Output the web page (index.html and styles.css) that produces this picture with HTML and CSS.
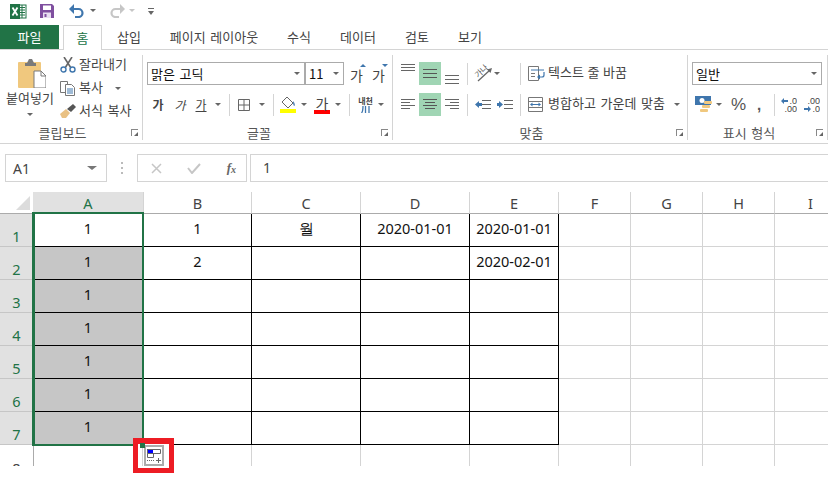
FILE: index.html
```html
<!DOCTYPE html>
<html lang="ko">
<head>
<meta charset="utf-8">
<title>Excel</title>
<link rel="stylesheet" href="styles.css">
</head>
<body>
<div class="app">
  <div class="qat">
    <svg class="q-excel" width="17" height="15" viewBox="0 0 17 15"><rect x="5" y="1" width="11" height="13" fill="#fff" stroke="#217346"/><path d="M9 3.5h6M9 6h6M9 8.5h6M9 11h6M12 1v13" stroke="#217346" fill="none"/><rect x="0" y="0" width="10" height="15" fill="#217346"/><path d="M2.5 3.5l5 8M7.5 3.5l-5 8" stroke="#fff" stroke-width="1.8" fill="none"/></svg>
    <svg class="q-save" width="14" height="14" viewBox="0 0 14 14"><path d="M0 0h12l2 2v12H0z" fill="#7f4f9f"/><rect x="3" y="1.5" width="8" height="4.5" fill="#fff"/><rect x="3" y="8.5" width="8" height="5.5" fill="#e8dff0"/><rect x="4.5" y="10" width="2" height="3" fill="#7f4f9f"/></svg>
    <svg class="q-undo" width="15" height="14" viewBox="0 0 15 14"><path d="M3 5h6.5a4 4 0 0 1 0 8H6" stroke="#3f76ad" stroke-width="2.2" fill="none"/><path d="M0 5l5-5v10z" fill="#3f76ad"/></svg>
    <span class="caret q-c1"></span>
    <svg class="q-redo" width="15" height="14" viewBox="0 0 15 14"><path d="M12 5H5.5a4 4 0 0 0 0 8H9" stroke="#c6c6c6" stroke-width="2.2" fill="none"/><path d="M15 5l-5-5v10z" fill="#c6c6c6"/></svg>
    <span class="caret caret-light q-c2"></span>
    <svg class="q-more" width="6" height="7" viewBox="0 0 6 7"><path d="M0 0h6v1H0zM0 3h6L3 7z" fill="#666"/></svg>
  </div>

  <div class="tabs">
    <div class="tab tab-file">파일</div>
    <div class="tab tab-home">홈</div>
    <div class="tab t54">삽입</div>
    <div class="tab t116">페이지 레이아웃</div>
    <div class="tab t54">수식</div>
    <div class="tab t64">데이터</div>
    <div class="tab t54">검토</div>
    <div class="tab t52">보기</div>
  </div>

  <div class="ribbon">
    <section class="grp g-clip">
      <div class="clip-body">
        <div class="paste">
          <svg class="paste-icon" width="28" height="29" viewBox="0 0 28 29"><rect x="0" y="3" width="23" height="26" rx="1" fill="#f0c87e"/><path d="M7 4h2l2-4h3l2 4h2v3H7z" fill="#7a7a7a"/><path d="M16 12h7l5 5v12H16z" fill="#fff" stroke="#7a7a7a"/><path d="M23 12v5h5" fill="none" stroke="#7a7a7a"/></svg>
          <span class="paste-label">붙여넣기</span>
          <span class="caret"></span>
        </div>
        <div class="clip-list">
          <div class="clip-item">
            <svg width="16" height="16" viewBox="0 0 16 16"><path d="M4 0l7 11M12 0L5 11" stroke="#666" stroke-width="1.6" fill="none"/><circle cx="3.5" cy="12.5" r="2.5" fill="#fff" stroke="#3f76ad" stroke-width="1.4"/><circle cx="12.5" cy="12.5" r="2.5" fill="#fff" stroke="#3f76ad" stroke-width="1.4"/></svg>
            <span class="up2">잘라내기</span>
          </div>
          <div class="clip-item">
            <svg width="16" height="15" viewBox="0 0 16 15"><path d="M.5.5h7v11h-7z" fill="#fff" stroke="#777"/><path d="M5.5 3.5h6l3 3v8h-9z" fill="#fff" stroke="#777"/><path d="M7 8h6M7 10h6M7 12h6" stroke="#3f76ad"/></svg>
            <span class="up2">복사</span>
            <span class="caret ml9"></span>
          </div>
          <div class="clip-item">
            <svg width="16" height="14" viewBox="0 0 16 14"><path d="M0 10l6-5 4 4-4 5H2z" fill="#e9c184"/><path d="M7 5l6-5 3 3-5 5z" fill="#555"/></svg>
            <span class="up2">서식 복사</span>
          </div>
        </div>
      </div>
      <div class="grp-label">클립보드<i class="launch"></i></div>
    </section>

    <section class="grp g-font">
      <div class="rows">
        <div class="row pl4">
          <div class="combo c-font"><span class="up1">맑은 고딕</span><span class="caret"></span></div>
          <div class="combo c-size"><span class="up1">11</span><span class="caret"></span></div>
          <div class="gly ml6 g-grow">가<i class="up"></i></div>
          <div class="gly ml6 g-grow">가<i class="down"></i></div>
        </div>
        <div class="row pl9">
          <span class="fmt fmt-b">가</span>
          <span class="fmt fmt-i ml10">가</span>
          <span class="fmt fmt-u ml9">가</span>
          <span class="caret ml8"></span>
          <span class="sep ml8"></span>
          <svg class="ml8" width="12" height="12" viewBox="0 0 12 12"><path d="M.5.5h11v11H.5zM6 .5v11M.5 6h11" fill="none" stroke="#666"/></svg>
          <span class="caret ml9"></span>
          <span class="sep ml8"></span>
          <svg class="ml6" width="16" height="17" viewBox="0 0 16 17"><path d="M7 1l6 6-5 5-6-6z" fill="#fff" stroke="#666"/><path d="M13 5c2 2 2 4 1.500 5-1 0-1.500-2-1.500-5z" fill="#3f76ad"/><rect y="13" width="16" height="4" fill="#ffff00"/></svg>
          <span class="caret ml5"></span>
          <span class="color-a ml7">가</span>
          <span class="caret ml5"></span>
          <span class="sep ml8"></span>
          <span class="phon ml8"><span>내천</span><svg width="9" height="7" viewBox="0 0 9 7"><path d="M2 0C2 4 1.500 6 .5 7M4.500 0v7M8 0v7" fill="none" stroke="#3f76ad" stroke-width="1.300"/></svg></span>
          <span class="caret ml5"></span>
        </div>
      </div>
      <div class="grp-label">글꼴<i class="launch"></i></div>
    </section>

    <section class="grp g-align">
      <div class="rows">
        <div class="row pl8">
          <svg width="14" height="23" viewBox="0 0 14 23"><path d="M0 2.500h14M0 5.500h14M0 8.500h14" stroke="#666"/></svg>
          <span class="hl ml4"><svg width="14" height="9" viewBox="0 0 14 9"><path d="M0 .5h14M0 4.500h14M0 8.500h14" stroke="#555"/></svg></span>
          <svg class="ml4" width="14" height="23" viewBox="0 0 14 23"><path d="M0 13.500h14M0 17.500h14M0 21.500h14" stroke="#666"/></svg>
          <span class="sep ml8"></span>
          <span class="orient ml7"><span class="orient-text">가나</span><svg width="17" height="16" viewBox="0 0 17 16"><path d="M3 15L15 4" stroke="#666" stroke-width="1.300"/><path d="M17 2l-1.500 5-3.500-3.500z" fill="#666"/></svg></span>
          <span class="caret ml2"></span>
          <span class="sep ml20"></span>
          <svg class="ml7" width="17" height="15" viewBox="0 0 17 15"><path d="M.5.5h10v14H.5z" fill="#fff" stroke="#777"/><path d="M3 4h13" stroke="#3f76ad"/><path d="M3 7.500h4M3 10.500h4" stroke="#777"/><path d="M16 6v3a2 2 0 0 1-2 2h-3" stroke="#3f76ad" fill="none" stroke-width="1.200"/><path d="M12 8.500l-3 2.500 3 2.500z" fill="#3f76ad"/></svg>
          <span class="rt rt-wrap ml3">텍스트 줄 바꿈</span>
        </div>
        <div class="row pl8">
          <svg width="14" height="11" viewBox="0 0 14 11"><path d="M0 .5h14M0 3.500h9M0 6.500h14M0 9.500h9" stroke="#666"/></svg>
          <span class="hl ml4"><svg width="14" height="11" viewBox="0 0 14 11"><path d="M0 .5h14M2 3.500h10M0 6.500h14M2 9.500h10" stroke="#555"/></svg></span>
          <svg class="ml4" width="14" height="11" viewBox="0 0 14 11"><path d="M0 .5h14M5 3.500h9M0 6.500h14M5 9.500h9" stroke="#666"/></svg>
          <span class="sep ml8"></span>
          <svg class="ml7" width="16" height="9" viewBox="0 0 16 9"><path d="M7 .5h9M7 4.500h9M7 8.500h9" stroke="#666"/><path d="M0 4.500L4 1v2h3v3H4v2z" fill="#3f76ad"/></svg>
          <svg class="ml6" width="16" height="9" viewBox="0 0 16 9"><path d="M7 .5h9M7 4.500h9M7 8.500h9" stroke="#666"/><path d="M6 4.500L2 1v2H0v3h2v2z" fill="#3f76ad"/></svg>
          <span class="sep ml7"></span>
          <svg class="ml7" width="15" height="15" viewBox="0 0 15 15"><path d="M.5.500h14v14H.5zM.5 4.500h14M.5 10.500h14" fill="none" stroke="#777"/><path d="M3 7.500h9" stroke="#3f76ad"/><path d="M2 7.500l2.500-2v4zM13 7.500l-2.500-2v4z" fill="#3f76ad"/></svg>
          <span class="rt ml5">병합하고 가운데 맞춤</span>
          <span class="caret ml9"></span>
        </div>
      </div>
      <div class="grp-label">맞춤<i class="launch"></i></div>
    </section>

    <section class="grp g-num">
      <div class="rows">
        <div class="row pl4">
          <div class="combo c-num"><span class="up1">일반</span><span class="caret"></span></div>
        </div>
        <div class="row pl7">
          <svg width="17" height="18" viewBox="0 0 17 18"><rect width="16" height="9" fill="#3f76ad"/><circle cx="7" cy="4.500" r="2.500" fill="#fff"/><rect x="9" y="5" width="8" height="3" rx="1" fill="#f0c87e"/><rect x="7" y="9" width="8" height="3" rx="1" fill="#f0c87e"/><rect x="5" y="13" width="8" height="3" rx="1" fill="#f0c87e"/></svg>
          <span class="caret ml4"></span>
          <span class="pct">%</span>
          <span class="cma">,</span>
          <span class="sep ml12"></span>
          <span class="dec ml6"><span class="dec-line"><svg width="7" height="6" viewBox="0 0 7 6"><path d="M0 3l3-3v2h4v2H3v2z" fill="#3f76ad"/></svg><span>.0</span></span><span class="dec-line"><span>.00</span></span></span>
          <span class="dec ml7"><span class="dec-line"><span>.00</span></span><span class="dec-line"><svg width="7" height="6" viewBox="0 0 7 6"><path d="M7 3L4 0v2H0v2h4v2z" fill="#3f76ad"/></svg><span>.0</span></span></span>
        </div>
      </div>
      <div class="grp-label">표시 형식<i class="launch"></i></div>
    </section>
  </div>

  <div class="fbar">
    <div class="namebox"><span>A1</span><span class="caret caret-big"></span></div>
    <div class="dots"><i></i><i></i><i></i></div>
    <div class="fbtns">
      <svg width="11" height="11" viewBox="0 0 11 11"><path d="M1 1l9 9M10 1l-9 9" stroke="#c6c6c6" stroke-width="1.500"/></svg>
      <svg width="14" height="11" viewBox="0 0 14 11"><path d="M1 5l4 5 8-9" stroke="#c6c6c6" stroke-width="2" fill="none"/></svg>
      <span class="fx">f<sub>x</sub></span>
    </div>
    <div class="finput">1</div>
  </div>

  <div class="sheet">
    <div class="grid">
      <div class="h corner"><svg width="14" height="14" viewBox="0 0 14 14"><path d="M14 0v14H0z" fill="#dcdcdc"/></svg></div>
      <div class="h col sel">A</div><div class="h col">B</div><div class="h col">C</div><div class="h col">D</div><div class="h col">E</div><div class="h col">F</div><div class="h col">G</div><div class="h col">H</div><div class="h col">I</div>

      <div class="rh">1</div><div class="c b">1</div><div class="c b">1</div><div class="c b">월</div><div class="c b">2020-01-01</div><div class="c b">2020-01-01</div><div class="c"></div><div class="c"></div><div class="c"></div><div class="c"></div>
      <div class="rh">2</div><div class="c b f">1</div><div class="c b">2</div><div class="c b"></div><div class="c b"></div><div class="c b">2020-02-01</div><div class="c"></div><div class="c"></div><div class="c"></div><div class="c"></div>
      <div class="rh">3</div><div class="c b f">1</div><div class="c b"></div><div class="c b"></div><div class="c b"></div><div class="c b"></div><div class="c"></div><div class="c"></div><div class="c"></div><div class="c"></div>
      <div class="rh">4</div><div class="c b f">1</div><div class="c b"></div><div class="c b"></div><div class="c b"></div><div class="c b"></div><div class="c"></div><div class="c"></div><div class="c"></div><div class="c"></div>
      <div class="rh">5</div><div class="c b f">1</div><div class="c b"></div><div class="c b"></div><div class="c b"></div><div class="c b"></div><div class="c"></div><div class="c"></div><div class="c"></div><div class="c"></div>
      <div class="rh">6</div><div class="c b f">1</div><div class="c b"></div><div class="c b"></div><div class="c b"></div><div class="c b"></div><div class="c"></div><div class="c"></div><div class="c"></div><div class="c"></div>
      <div class="rh">7</div><div class="c b f">1</div><div class="c b"></div><div class="c b"></div><div class="c b"></div><div class="c b"></div><div class="c"></div><div class="c"></div><div class="c"></div><div class="c"></div>
      <div class="rh rh8">8</div><div class="c c8a"></div><div class="c"></div><div class="c"></div><div class="c"></div><div class="c"></div><div class="c"></div><div class="c"></div><div class="c"></div><div class="c"></div>
    </div>
    <div class="selection"></div>
  </div>

  <div class="callout">
    <svg width="20" height="21" viewBox="0 0 20 21"><rect x="1" y="1" width="18" height="19" fill="#fff" stroke="#ababab" stroke-width="2"/><rect x="3" y="4" width="6" height="4" fill="#0000ff"/><path d="M3.500 4.500h13v4h-13zM3.500 8.500h6v4h-6z" fill="none" stroke="#666"/><path d="M3 15.500h8" stroke="#666" stroke-dasharray="1 1"/><path d="M12 15.500h5M14.500 13v5" stroke="#666"/></svg>
  </div>
  <i class="handle"></i>
</div>
</body>
</html>
```
FILE: styles.css
```css
* { box-sizing: border-box; }
html, body { margin: 0; padding: 0; background: #fff; }
body { width: 828px; height: 480px; overflow: hidden; font-family: "Noto Sans CJK KR", "Noto Sans", sans-serif; font-size: 13px; word-spacing: 1px; color: #444; }
.app { position: relative; width: 828px; height: 480px; overflow: hidden; }
svg { display: block; flex: none; }
i { font-style: normal; }

.ml2 { margin-left: 2px; } .ml3 { margin-left: 3px; } .ml4 { margin-left: 4px; } .ml5 { margin-left: 5px; }
.ml6 { margin-left: 6px; } .ml7 { margin-left: 7px; } .ml8 { margin-left: 8px; } .ml9 { margin-left: 9px; }
.ml10 { margin-left: 10px; } .ml12 { margin-left: 12px; } .ml20 { margin-left: 20px; }
.pl4 { padding-left: 4px; } .pl7 { padding-left: 7px; } .pl8 { padding-left: 8px; } .pl9 { padding-left: 9px; }
.up1 { padding-bottom: 1px; }
.up2 { padding-bottom: 3px; }

.caret { display: block; flex: none; width: 0; height: 0; border: 3px solid transparent; border-top: 3px solid #666; border-bottom: 0; }
.caret-light { border-top-color: #c6c6c6; }
.caret-big { border-width: 4px 5px 0; border-top-color: #777; border-bottom: 0; }

/* quick access */
.qat { height: 25px; display: flex; align-items: flex-start; padding: 4px 0 0 10px; }
.q-save { margin-left: 13px; }
.q-undo { margin-left: 15px; }
.q-c1 { margin: 5px 0 0 6px; }
.q-redo { margin-left: 14px; }
.q-c2 { margin: 5px 0 0 4px; }
.q-more { margin: 4px 0 0 13px; }

/* tabs */
.tabs { height: 25px; display: flex; position: relative; z-index: 1; }
.tab { height: 25px; line-height: 24px; text-align: center; flex: none; }
.tab-file { width: 59px; height: 24px; background: #217346; color: #fff; }
.tab-home { width: 39px; margin-left: 4px; color: #217346; background: #fff; border: 1px solid #d4d4d4; border-bottom: 0; }
.t54 { width: 54px; } .t116 { width: 116px; } .t64 { width: 64px; } .t52 { width: 52px; }

/* ribbon */
.ribbon { height: 95px; margin-top: -1px; padding-top: 5px; display: flex; align-items: flex-start; border-top: 1px solid #d4d4d4; border-bottom: 1px solid #d4d4d4; }
.grp { height: 85px; flex: none; display: flex; flex-direction: column; justify-content: space-between; border-right: 1px solid #d4d4d4; }
.g-clip { width: 143px; }
.g-font { width: 250px; }
.g-align { width: 295px; }
.g-num { width: 140px; }
.grp-label { position: relative; height: 14px; line-height: 14px; padding-right: 17px; text-align: center; color: #555; }
.launch { position: absolute; right: 4px; top: 3px; width: 7px; height: 7px; border-left: 1px solid #888; border-top: 1px solid #888; }
.launch::after { content: ""; position: absolute; right: 0; bottom: 0; width: 0; height: 0; border-style: solid; border-width: 0 0 4px 4px; border-color: transparent transparent #666 transparent; }

.clip-body { display: flex; }
.paste { width: 60px; padding: 4px 0 0 0; display: flex; flex-direction: column; align-items: center; }
.paste-icon { margin-left: 4px; }
.paste-label { line-height: 16px; margin-top: 2px; }
.paste .caret { margin-top: 7px; }
.clip-list { display: flex; flex-direction: column; gap: 5px; padding-top: 1px; }
.clip-item { height: 18px; display: flex; align-items: center; gap: 3px; line-height: 18px; }

.rows { padding-top: 7px; display: flex; flex-direction: column; gap: 8px; }
.row { height: 23px; display: flex; align-items: center; }
.sep { display: block; flex: none; width: 1px; height: 22px; background: #d4d4d4; }
.combo { height: 23px; display: flex; align-items: center; justify-content: space-between; padding: 0 4px 0 3px; border: 1px solid #ababab; background: #fff; color: #111; line-height: 21px; flex: none; }
.c-font { width: 157px; border-right: 0; }
.c-size { width: 40px; border-left: 2px solid #ababab; }
.c-num { width: 130px; }
.gly { position: relative; width: 16px; height: 23px; line-height: 26px; font-size: 14px; }
.up, .down { position: absolute; right: 0; top: 2px; width: 0; height: 0; border: 3px solid transparent; }
.up { border-top: 0; border-bottom: 3px solid #3f76ad; }
.down { border-bottom: 0; border-top: 3px solid #3f76ad; }
.fmt { width: 12px; line-height: 14px; font-size: 12px; flex: none; text-align: center; }
.fmt-b { font-weight: 700; }
.fmt-i { font-style: italic; }
.fmt-u { text-decoration: underline; }
.color-a { width: 16px; height: 18px; line-height: 14px; font-size: 14px; text-align: center; border-bottom: 4px solid #ff0000; flex: none; }
.phon { width: 15px; display: flex; flex-direction: column; align-items: center; font-size: 8px; line-height: 10px; font-weight: 700; flex: none; }
.hl { width: 22px; height: 23px; background: #a0d5b4; display: flex; align-items: center; justify-content: center; flex: none; }
.rt { line-height: 18px; padding-bottom: 3px; white-space: nowrap; }
.rt-wrap { word-spacing: 0; }
.orient { position: relative; display: block; flex: none; width: 17px; height: 16px; }
.orient-text { position: absolute; left: -1px; top: 0; font-size: 8px; line-height: 10px; transform: rotate(-42deg); color: #555; }
.pct { width: 15px; margin-left: 9px; font: 17px/23px "Liberation Sans", sans-serif; color: #555; flex: none; }
.cma { width: 5px; margin-left: 11px; font: 700 15px/18px "Liberation Sans", sans-serif; color: #555; flex: none; }
.dec { width: 16px; display: flex; flex-direction: column; align-items: flex-end; font: 9px/8px "Liberation Sans", sans-serif; color: #444; flex: none; }
.dec-line { height: 8px; display: flex; align-items: center; gap: 1px; overflow: hidden; }

/* formula bar */
.fbar { height: 28px; margin-top: 10px; padding-left: 5px; display: flex; align-items: stretch; }
.namebox { width: 102px; border: 1px solid #d4d4d4; display: flex; align-items: center; justify-content: space-between; padding: 0 9px 0 7px; font: 14px "Noto Sans", sans-serif; color: #444; flex: none; }
.dots { width: 30px; display: flex; flex-direction: column; align-items: center; justify-content: center; gap: 3px; flex: none; }
.dots i { width: 2px; height: 2px; background: #bbb; }
.fbtns { width: 110px; border: 1px solid #d4d4d4; display: flex; align-items: center; padding: 0 10px 0 13px; justify-content: space-between; flex: none; }
.fx { font: italic 700 13px "Liberation Serif", serif; color: #666; }
.fx sub { font-size: 10px; vertical-align: -1px; }
.finput { flex: 1; margin-left: 3px; padding-left: 12px; border: 1px solid #d4d4d4; border-right: 0; font: 14px/26px "Noto Sans", sans-serif; color: #444; }

/* sheet */
.sheet { position: relative; height: 274px; margin-top: 10px; overflow: hidden; }
.grid { display: grid; grid-template-columns: 33px 111px 108px 109px 109px 89px 72px 72px 72px 72px; grid-template-rows: 22px repeat(8, 33px); font-family: "Noto Sans", sans-serif; font-size: 14.5px; }
.h { border-bottom: 1px solid #ababab; border-right: 1px solid #d4d4d4; }
.corner { background: #fff; border-right: 0; display: flex; justify-content: flex-end; padding: 4px 3px 0 0; }
.col { display: flex; align-items: center; justify-content: center; line-height: 18px; color: #444; }
.col.sel { background: #e1e1e1; color: #217346; }
.rh { display: flex; align-items: flex-end; justify-content: center; line-height: 18px; padding-bottom: 1px; background: #e1e1e1; border-bottom: 1px solid #c6c6c6; color: #217346; }
.rh8 { background: #fff; border-bottom: 0; color: #444; }
.c { display: flex; align-items: center; justify-content: center; line-height: 20px; padding-bottom: 4px; border-right: 1px solid #d4d4d4; border-bottom: 1px solid #d4d4d4; color: #111; }
.c8a { border-left: 1px solid #ababab; }
.b { border-right-color: #000; border-bottom-color: #000; }
.f { background: #c6c6c6; }
.selection { position: absolute; left: 32px; top: 20px; width: 112px; height: 234px; border: 2px solid #217346; border-left-width: 3px; }

.callout { position: absolute; left: 133px; top: 438px; width: 41px; height: 35px; border: solid #ed1c24; border-width: 6px 5px 5px; background: #fff; display: flex; justify-content: center; align-items: flex-start; padding: 1px 0 0 0; }
.callout::before { content: ""; position: absolute; left: 4px; top: 0; width: 1px; height: 22px; background: #d4d4d4; }
.handle { position: absolute; left: 140px; top: 443px; width: 5px; height: 5px; background: #217346; }
```
